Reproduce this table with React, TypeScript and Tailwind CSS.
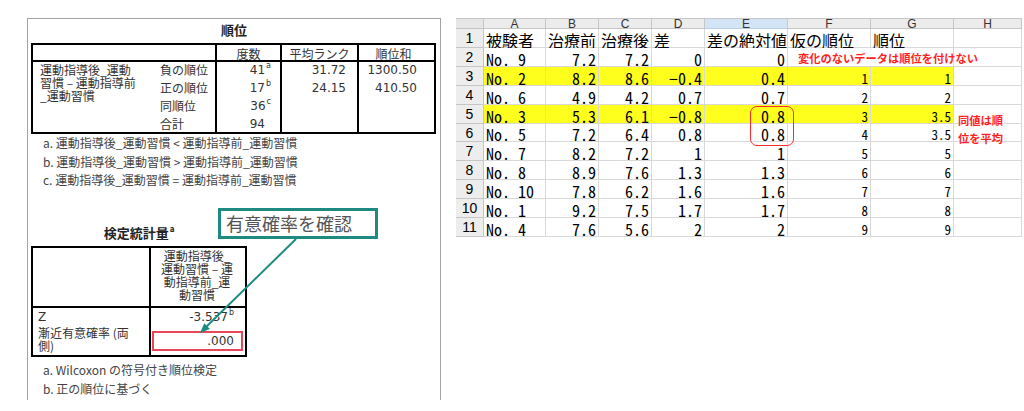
import React from "react";

// 表計算シートの列幅 (A〜H)
const COLW = ["w-[62px]", "w-[53px]", "w-[53px]", "w-[53px]", "w-[83px]", "w-[83px]", "w-[83px]", "w-[68px]"];
const LETTERS = ["A", "B", "C", "D", "E", "F", "G", "H"];

type SheetRow = {
  cells: string[]; // A〜G
  yellow?: boolean;
  note?: string; // F列からはみ出す注記
  hNote?: string; // H列の注記
  hTop?: string;
};

const rows: SheetRow[] = [
  { cells: ["No. 9", "7.2", "7.2", "0", "0", "", ""], note: "変化のないデータは順位を付けない" },
  { cells: ["No. 2", "8.2", "8.6", "−0.4", "0.4", "1", "1"], yellow: true },
  { cells: ["No. 6", "4.9", "4.2", "0.7", "0.7", "2", "2"] },
  { cells: ["No. 3", "5.3", "6.1", "−0.8", "0.8", "3", "3.5"], yellow: true, hNote: "同値は順", hTop: "pt-[1px]" },
  { cells: ["No. 5", "7.2", "6.4", "0.8", "0.8", "4", "3.5"], hNote: "位を平均", hTop: "pt-0" },
  { cells: ["No. 7", "8.2", "7.2", "1", "1", "5", "5"] },
  { cells: ["No. 8", "8.9", "7.6", "1.3", "1.3", "6", "6"] },
  { cells: ["No. 10", "7.8", "6.2", "1.6", "1.6", "7", "7"] },
  { cells: ["No. 1", "9.2", "7.5", "1.7", "1.7", "8", "8"] },
  { cells: ["No. 4", "7.6", "5.6", "2", "2", "9", "9"] },
];

const headers = ["被験者", "治療前", "治療後", "差", "差の絶対値", "仮の順位", "順位", ""];

function Sup({ c }: { c: string }) {
  return <span className="relative -top-[6px] text-[8px] leading-none ml-[1px]">{c}</span>;
}

function LeftPanel() {
  return (
    <div className="ml-[27px] mt-[18px] w-[414px] h-[382px] border border-b-0 border-[#a3a3a3] px-[3px] flex flex-col text-[#333] font-['Noto_Sans_CJK_JP',sans-serif]">
      <div className="mt-[3px] text-center text-[13px] leading-[16px] font-bold text-[#222]">順位</div>

      {/* 順位の表 */}
      <div className="mt-[5px] w-[405px] border-2 border-black flex flex-col text-[12px]">
        <div className="flex h-[17px] border-b-2 border-black leading-[17px]">
          <div className="w-[184px] border-r-2 border-black" />
          <div className="w-[65px] border-r-2 border-black text-center">度数</div>
          <div className="w-[77px] border-r-2 border-black text-center">平均ランク</div>
          <div className="w-[69px] text-center">順位和</div>
        </div>
        <div className="flex h-[70px]">
          <div className="w-[184px] border-r-2 border-black flex">
            <div className="w-[127px] pl-[7px] pt-[1px] leading-[13px]">
              運動指導後_運動
              <br />
              習慣 – 運動指導前
              <br />
              _運動習慣
            </div>
            <div className="leading-[18px] -mt-[1px]">
              <div>負の順位</div>
              <div>正の順位</div>
              <div>同順位</div>
              <div>合計</div>
            </div>
          </div>
          <div className="w-[65px] border-r-2 border-black text-right pr-[9px] leading-[18px] -mt-[1px] font-['DejaVu_Sans',sans-serif]">
            <div>41<Sup c="a" /></div>
            <div>17<Sup c="b" /></div>
            <div>36<Sup c="c" /></div>
            <div className="pr-[6px]">94</div>
          </div>
          <div className="w-[77px] border-r-2 border-black text-right pr-[11px] leading-[18px] -mt-[1px] font-['DejaVu_Sans',sans-serif]">
            <div>31.72</div>
            <div>24.15</div>
          </div>
          <div className="w-[69px] text-right pr-[11px] leading-[18px] -mt-[1px] font-['DejaVu_Sans',sans-serif]">
            <div>1300.50</div>
            <div>410.50</div>
          </div>
        </div>
      </div>

      <div className="pl-[12px] text-[12px] leading-[18.5px] text-[#444]">
        <div>a. 運動指導後_運動習慣 &lt; 運動指導前_運動習慣</div>
        <div>b. 運動指導後_運動習慣 &gt; 運動指導前_運動習慣</div>
        <div>c. 運動指導後_運動習慣 = 運動指導前_運動習慣</div>
      </div>

      {/* 検定統計量 */}
      <div className="w-[216px] mt-[35px]">
        <div className="text-center text-[13px] leading-[16px] font-bold text-[#222]">
          検定統計量<Sup c="a" />
        </div>
        <div className="mt-[5px] border-2 border-black flex flex-col text-[12px]">
          <div className="flex h-[60px] border-b-2 border-black">
            <div className="w-[118px] border-r-2 border-black" />
            <div className="w-[92px] text-center leading-[13px] pt-[1px]">
              運動指導後_
              <br />
              運動習慣 – 運
              <br />
              動指導前_運
              <br />
              動習慣
            </div>
          </div>
          <div className="flex h-[47px]">
            <div className="w-[118px] border-r-2 border-black pl-[5px]">
              <div className="leading-[18px] font-['DejaVu_Sans',sans-serif]">Z</div>
              <div className="leading-[13px]">
                漸近有意確率 (両
                <br />
                側)
              </div>
            </div>
            <div className="w-[92px] font-['DejaVu_Sans',sans-serif]">
              <div className="leading-[18px] text-right pr-[9px]">
                -3.537<Sup c="b" />
              </div>
              <div className="ml-[1px] mt-[5px] w-[91px] h-[20px] border-2 border-[#e8475a] text-right pr-[7px] leading-[16px]">
                .000
              </div>
            </div>
          </div>
        </div>
      </div>

      <div className="pl-[12px] pt-[3px] text-[12px] leading-[19px] text-[#444]">
        <div>a. Wilcoxon の符号付き順位検定</div>
        <div>b. 正の順位に基づく</div>
      </div>
    </div>
  );
}

function Sheet() {
  return (
    <div className="ml-[15px] mt-[18px] flex flex-col text-black font-['Noto_Sans_Mono_CJK_JP','Noto_Sans_CJK_JP',monospace]">
      {/* 列見出し */}
      <div className="flex h-[11px] border-t border-[#c6c6c6]">
        <div className="w-[28px] shrink-0 bg-[#e6e6e6] border-r border-b border-[#c6c6c6]" />
        {LETTERS.map((l, i) => (
          <div
            key={l}
            className={`${COLW[i]} shrink-0 border-r border-b text-center text-[12px] leading-[10px] text-[#333] font-['Liberation_Sans',sans-serif] ${
              l === "E" ? "bg-[#d3e4f6] border-[#b9cfe6]" : "bg-[#ececec] border-[#c6c6c6]"
            }`}
          >
            {l}
          </div>
        ))}
      </div>

      {/* 1行目 */}
      <div className="flex h-[19px]">
        <div className="w-[28px] shrink-0 bg-[#ededed] border-r border-b border-[#c6c6c6] text-[14px] leading-[18px] text-center font-['Liberation_Sans',sans-serif]">
          1
        </div>
        {headers.map((h, i) => (
          <div key={i} className={`${COLW[i]} shrink-0 border-r border-b border-[#d9d9d9] flex items-end pl-[2px] text-[16px] leading-[14px] whitespace-nowrap`}>
            {h}
          </div>
        ))}
      </div>

      {rows.map((r, ri) => (
        <div key={ri} className="flex h-[18.9px]">
          <div className="w-[28px] shrink-0 bg-[#ededed] border-r border-b border-[#c6c6c6] text-[14px] leading-[18px] text-center font-['Liberation_Sans',sans-serif]">
            {ri + 2}
          </div>
          {r.cells.map((c, ci) => {
            const small = ci >= 5;
            const isNote = !!r.note && ci === 5;
            return (
              <div
                key={ci}
                className={`${COLW[ci]} shrink-0 border-b border-[#d9d9d9] flex items-end whitespace-nowrap ${isNote ? "" : "border-r"} ${
                  r.yellow ? "bg-[#ffff1e]" : "bg-white"
                } ${ci === 0 || isNote ? "justify-start pl-[2px]" : "justify-end pr-[2px]"} ${
                  small ? "text-[13px] leading-[13px]" : "text-[16px] leading-[14px]"
                }`}
              >
                {isNote ? (
                  <span className="relative z-10 pl-[8px] text-[11.25px] leading-[15px] font-bold text-[#ff1f1f] font-['Noto_Sans_CJK_JP',sans-serif]">
                    {r.note}
                  </span>
                ) : (
                  c
                )}
              </div>
            );
          })}
          <div className={`w-[68px] shrink-0 border-r border-b border-[#d9d9d9] ${r.hTop ?? ""} pl-[4px]`}>
            {r.hNote && (
              <span className="text-[11.25px] leading-[14px] font-bold text-[#ff1f1f] font-['Noto_Sans_CJK_JP',sans-serif]">
                {r.hNote}
              </span>
            )}
          </div>
        </div>
      ))}
    </div>
  );
}

export default function App() {
  return (
    <div className="relative w-[1024px] h-[411px] bg-white flex items-start overflow-hidden">
      <LeftPanel />
      <Sheet />

      {/* 吹き出し */}
      <div className="absolute left-[218px] top-[208px] w-[160px] h-[31px] border-[3px] border-[#1e8b83] bg-white flex items-center pl-[5px] text-[18px] text-[#555] font-['Noto_Sans_CJK_JP',sans-serif]">
        有意確率を確認
      </div>
      <svg className="absolute left-0 top-0 pointer-events-none" width={1024} height={411}>
        <line x1={296} y1={239} x2={206} y2={327} stroke="#1e8b83" strokeWidth={2} />
        <polygon points="200,333 209.9,328.9 204.3,323.2" fill="#1e8b83" />
      </svg>

      {/* 同値の囲み */}
      <div className="absolute left-[750px] top-[106px] w-[44px] h-[40px] rounded-[7px] border-[1.5px] border-[#ff2a2a]" />
    </div>
  );
}
